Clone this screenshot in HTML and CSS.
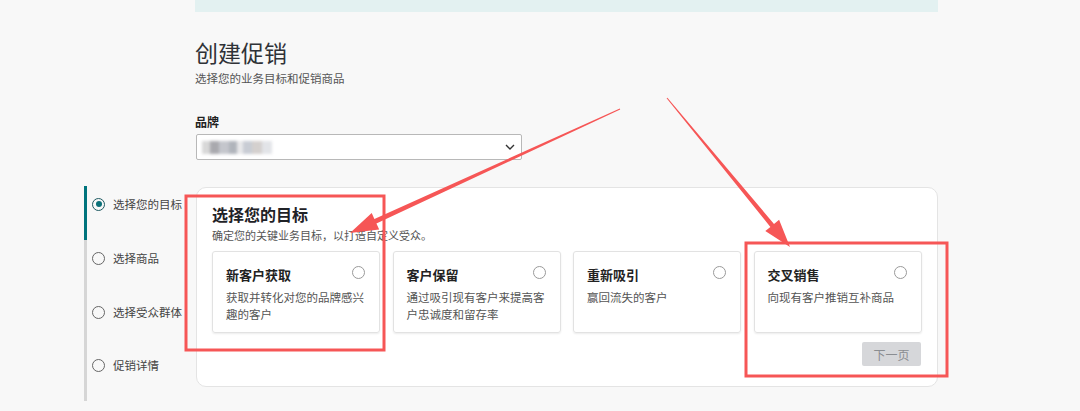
FILE: index.html
```html
<!DOCTYPE html>
<html lang="zh-CN">
<head>
  <meta charset="UTF-8">
  <meta name="viewport" content="width=device-width, initial-scale=1.0">
  <title>创建促销</title>
  <link rel="stylesheet" href="styles.css">
</head>
<body>
  <div class="page">
    <div class="header">
      <div class="banner"></div>
      <h1 class="title">创建促销</h1>
      <p class="subtitle">选择您的业务目标和促销商品</p>
      <label class="field-label">品牌</label>
      <div class="select">
        <span class="blurred"></span>
        <svg class="chevron" width="10" height="6" viewBox="0 0 10 6"><path d="M1 1l4 4 4-4" fill="none" stroke="#333" stroke-width="1.4"/></svg>
      </div>
    </div>

    <div class="wizard">
      <ul class="steps">
        <li class="step active"><span class="dot"></span>选择您的目标</li>
        <li class="step"><span class="dot"></span>选择商品</li>
        <li class="step"><span class="dot"></span>选择受众群体</li>
        <li class="step"><span class="dot"></span>促销详情</li>
      </ul>

      <div class="panel">
        <h2 class="panel-title">选择您的目标</h2>
        <p class="panel-sub">确定您的关键业务目标，以打造自定义受众。</p>
        <div class="goals">
          <div class="goal">
            <div class="goal-head"><span class="goal-name">新客户获取</span><span class="radio"></span></div>
            <p class="goal-desc">获取并转化对您的品牌感兴趣的客户</p>
          </div>
          <div class="goal">
            <div class="goal-head"><span class="goal-name">客户保留</span><span class="radio"></span></div>
            <p class="goal-desc">通过吸引现有客户来提高客户忠诚度和留存率</p>
          </div>
          <div class="goal">
            <div class="goal-head"><span class="goal-name">重新吸引</span><span class="radio"></span></div>
            <p class="goal-desc">赢回流失的客户</p>
          </div>
          <div class="goal">
            <div class="goal-head"><span class="goal-name">交叉销售</span><span class="radio"></span></div>
            <p class="goal-desc">向现有客户推销互补商品</p>
          </div>
        </div>
        <div class="actions">
          <button class="next" disabled>下一页</button>
        </div>
      </div>
    </div>
  </div>

  <!-- annotation layer -->
  <svg class="marks" width="1080" height="411" viewBox="0 0 1080 411">
    <rect x="186" y="196" width="198" height="154" fill="none" stroke="#f65656" stroke-width="3"/>
    <rect x="746" y="243" width="201" height="133" fill="none" stroke="#f65656" stroke-width="3"/>
    <polygon fill="#f65656" points="619.8,108.5 374.4,219 371.7,213.1 350,233 379.2,229.5 376.4,223.6 620.2,109.5"/>
    <polygon fill="#f65656" points="666.6,98.3 770.4,226.9 765.3,231.1 790,247 779.1,219.7 774,223.9 667.4,97.7"/>
  </svg>
</body>
</html>
```

FILE: styles.css
```css
body {
  margin: 0;
  background: #f8f8f8;
  font-family: "Noto Sans CJK SC", "Noto Sans", sans-serif;
  color: #333;
  width: 1080px;
  height: 411px;
  overflow: hidden;
  position: relative;
}
.page {
  margin-left: 84px;
  width: 854px;
}
.header {
  margin-left: 111px;
}
.banner {
  height: 12px;
  background: #e3f1f1;
}
.title {
  margin: 25px 0 0;
  font-size: 23px;
  font-weight: 400;
  line-height: 30px;
  color: #2f3237;
}
.subtitle {
  margin: 3px 0 0;
  font-size: 11.5px;
  line-height: 16px;
  color: #555;
}
.field-label {
  display: block;
  margin-top: 28px;
  font-size: 12px;
  font-weight: 700;
  line-height: 16px;
  color: #222;
}
.select {
  margin-top: 4px;
  margin-left: 1px;
  width: 326px;
  height: 26px;
  box-sizing: border-box;
  background: #fff;
  border: 1px solid #b8b8b8;
  border-radius: 2px;
  display: flex;
  align-items: center;
  justify-content: space-between;
  padding: 0 6px 0 5px;
}
.blurred {
  width: 70px;
  height: 13px;
  background: linear-gradient(90deg, #d8d8d8 0 12%, #a9a9ae 12% 25%, #c4c6cc 25% 38%, #b0b4bb 38% 50%, #e8e8ea 50% 58%, #c8ccd4 58% 72%, #d4d0ce 72% 86%, #e2e4e8 86% 100%);
  filter: blur(1.6px);
}
.wizard {
  display: flex;
  margin-top: 26px;
}
.steps {
  list-style: none;
  margin: 0;
  padding: 0;
  width: 109px;
  height: 215px;
  border-left: 3px solid #d6d6d6;
  position: relative;
}
.steps::before {
  content: "";
  position: absolute;
  left: -3px;
  top: 0;
  width: 3px;
  height: 54px;
  background: #00747d;
}
.step {
  display: flex;
  align-items: center;
  height: 36px;
  padding-left: 5px;
  font-size: 11.5px;
  color: #444;
  margin-top: 18px;
}
.step:first-child {
  margin-top: 0;
}
.step:last-child {
  margin-top: 17px;
}
.dot {
  width: 11px;
  height: 11px;
  border: 1.5px solid #666;
  border-radius: 50%;
  margin-right: 8px;
  flex: none;
  position: relative;
}
.step.active .dot {
  border-color: #1e5a61;
}
.step.active .dot::after {
  content: "";
  position: absolute;
  left: 2.5px;
  top: 2.5px;
  width: 6px;
  height: 6px;
  border-radius: 50%;
  background: #0b7078;
}
.panel {
  width: 742px;
  height: 200px;
  margin-top: 1px;
  background: #fff;
  border: 1px solid #e4e4e4;
  border-radius: 10px;
  box-sizing: border-box;
  padding: 14px 16px 0 15px;
}
.panel-title {
  margin: 0;
  font-size: 16px;
  font-weight: 700;
  line-height: 24px;
  color: #1f2227;
}
.panel-sub {
  margin: 1px 0 0;
  font-size: 11px;
  line-height: 16px;
  color: #555;
}
.goals {
  display: grid;
  grid-template-columns: repeat(4, 168px);
  column-gap: 12.5px;
  margin-top: 8px;
}
.goal {
  height: 82px;
  box-sizing: border-box;
  border: 1px solid #e2e2e2;
  border-radius: 3px;
  box-shadow: 0 1px 2px rgba(0, 0, 0, 0.08);
  padding: 12px 14px 0 13px;
}
.goal-head {
  display: flex;
  justify-content: space-between;
  align-items: center;
  height: 20px;
}
.goal-name {
  font-size: 13px;
  font-weight: 700;
  color: #222;
}
.radio {
  width: 11px;
  height: 11px;
  border: 1px solid #9a9a9a;
  border-radius: 50%;
  margin-top: -3px;
}
.goal-desc {
  margin: 5px 0 0;
  font-size: 11.5px;
  line-height: 17px;
  color: #555;
}
.actions {
  display: flex;
  justify-content: flex-end;
  margin-top: 9px;
}
.next {
  width: 59px;
  height: 24px;
  border: none;
  border-radius: 2px;
  background: #d6d7da;
  color: #8a8d91;
  font-family: inherit;
  font-size: 12px;
  padding: 0;
}
.marks {
  position: absolute;
  left: 0;
  top: 0;
  pointer-events: none;
}
```
